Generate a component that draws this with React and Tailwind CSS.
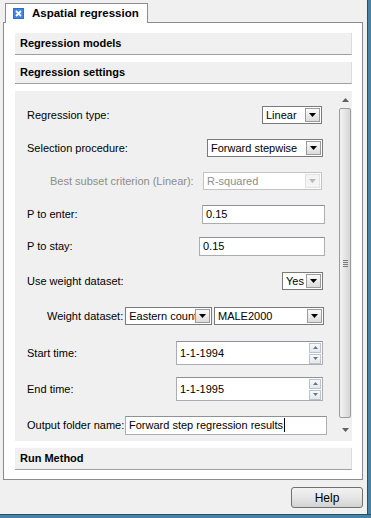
const font = { fontFamily: '"Liberation Sans", Arial, sans-serif' };

function Arrow({ disabled }) {
  return (
    <svg width="7" height="4" viewBox="0 0 7 4">
      <path d="M0 0h7L3.5 4z" fill={disabled ? "#b8b8b8" : "#000"} />
    </svg>
  );
}

function Combo({ value, className, disabled }) {
  return (
    <div
      className={`flex h-[18px] shrink-0 items-center border bg-white pr-px ${
        disabled ? "border-[#c4c4c4] bg-[#f4f4f4] text-[#8d8d8d]" : "border-[#7a7a7a] text-black"
      } ${className}`}
    >
      <span className="flex-1 overflow-hidden whitespace-nowrap pl-[3px] leading-[16px]">{value}</span>
      <div
        className={`flex h-[14px] w-[15px] shrink-0 items-center justify-center border ${
          disabled ? "border-[#e2e2e2] bg-[#f4f4f4]" : "border-[#9b9b9b] bg-gradient-to-b from-[#fafafa] to-[#dcdcdc]"
        }`}
      >
        <Arrow disabled={disabled} />
      </div>
    </div>
  );
}

function TextBox({ value, className, caret }) {
  return (
    <div className={`flex h-[19px] shrink-0 items-center border border-[#abadb3] border-t-[#8e9196] bg-white pl-[3px] ${className}`}>
      <span className="whitespace-nowrap leading-[16px]">{value}</span>
      {caret && <span className="ml-px h-[14px] w-px bg-black" />}
    </div>
  );
}

function SpinArrow({ up }) {
  return (
    <div className="flex h-[10px] w-[12px] items-center justify-center border border-[#b9c3cf] bg-gradient-to-b from-[#f7f9fb] to-[#e3e8ee]">
      <svg width="5" height="3" viewBox="0 0 5 3">
        <path d={up ? "M0 3h5L2.5 0z" : "M0 0h5L2.5 3z"} fill="#6d7680" />
      </svg>
    </div>
  );
}

function Spin({ value }) {
  return (
    <div className="mr-[15px] ml-auto flex h-[24px] w-[147px] items-center border border-[#abadb3] border-t-[#8e9196] bg-white pr-px pl-[3px]">
      <span className="flex-1 leading-[16px]">{value}</span>
      <div className="flex flex-col gap-px">
        <SpinArrow up />
        <SpinArrow />
      </div>
    </div>
  );
}

function Header({ title }) {
  return (
    <div className="flex h-[22px] items-center border-r border-b border-r-[#dcdcdc] border-b-[#a0a0a0] bg-[#f0f0f0] pl-[5px] text-[11px] font-bold text-black">
      {title}
    </div>
  );
}

function Row({ className, children }) {
  return <div className={`flex h-[20px] items-center whitespace-nowrap ${className}`}>{children}</div>;
}

export default function App() {
  return (
    <div className="flex h-[518px] w-[371px] flex-col overflow-hidden bg-[#f0f0f0] text-[11px] text-black" style={font}>
      <div className="flex flex-1">
        <div className="flex w-[367px] flex-col">
          {/* tab strip */}
          <div className="ml-[3px] flex h-[23px] w-[360px] items-end">
            <div className="h-full w-[2px] border-b border-[#898c95]" />
            <div className="flex h-[20px] w-[143px] items-center gap-[8px] border border-b-0 border-[#898c95] bg-white pl-[7px]">
              <svg width="11" height="11" viewBox="0 0 11 11">
                <rect x="0" y="0" width="11" height="11" fill="#2f6fc8" />
                <rect x="1" y="1" width="9" height="9" fill="#3f86e0" />
                <path d="M3 3l5 5M8 3l-5 5" stroke="#fff" strokeWidth="1.8" />
              </svg>
              <span className="text-[11.5px] font-bold">Aspatial regression</span>
            </div>
            <div className="h-full flex-1 border-b border-[#898c95]" />
          </div>

          {/* tab panel */}
          <div className="ml-[3px] flex h-[457px] w-[360px] flex-col gap-[7px] border border-t-0 border-[#898c95] bg-white pt-[10px] pr-[10px] pl-[11px]">
            <Header title="Regression models" />
            <Header title="Regression settings" />

            <div className="flex h-[350px] bg-[#f0f0f0]">
              <div className="flex flex-1 flex-col pt-[14px]">
                <Row className="pl-[12px]">
                  <span>Regression type:</span>
                  <Combo value="Linear" className="mr-[16px] ml-auto w-[60px]" />
                </Row>
                <Row className="mt-[13px] pl-[12px]">
                  <span>Selection procedure:</span>
                  <Combo value="Forward stepwise" className="mr-[15px] ml-auto w-[116px]" />
                </Row>
                <Row className="mt-[13px] pl-[35px]">
                  <span className="text-[#8d8d8d]">Best subset criterion (Linear):</span>
                  <Combo value="R-squared" disabled className="mr-[16px] ml-auto w-[119px]" />
                </Row>
                <Row className="mt-[13px] pl-[12px]">
                  <span>P to enter:</span>
                  <TextBox value="0.15" className="mr-[13px] ml-auto w-[123px]" />
                </Row>
                <Row className="mt-[12px] pl-[12px]">
                  <span>P to stay:</span>
                  <TextBox value="0.15" className="mr-[13px] ml-auto w-[126px]" />
                </Row>
                <Row className="mt-[15px] pl-[12px]">
                  <span>Use weight dataset:</span>
                  <Combo value="Yes" className="mr-[15px] ml-auto w-[41px]" />
                </Row>
                <Row className="mt-[15px] pl-[32px]">
                  <span>Weight dataset:</span>
                  <Combo value="Eastern count" className="ml-[2px] w-[87px]" />
                  <Combo value="MALE2000" className="mr-[14px] ml-auto w-[110px]" />
                </Row>
                <div className="mt-[15px] flex h-[24px] items-center pl-[12px]">
                  <span>Start time:</span>
                  <Spin value="1-1-1994" />
                </div>
                <div className="mt-[12px] flex h-[24px] items-center pl-[12px]">
                  <span>End time:</span>
                  <Spin value="1-1-1995" />
                </div>
                <Row className="mt-[14px] pl-[12px]">
                  <span>Output folder name:</span>
                  <TextBox value="Forward step regression results" caret className="mr-[11px] ml-auto w-[202px]" />
                </Row>
              </div>

              {/* scrollbar */}
              <div className="flex w-[14px] flex-col items-center bg-[#f0f0f0]">
                <div className="flex h-[17px] items-center justify-center">
                  <svg width="7" height="4" viewBox="0 0 7 4">
                    <path d="M0 4h7L3.5 0z" fill="#606060" />
                  </svg>
                </div>
                <div className="flex h-[310px] w-[12px] items-center justify-center rounded-[2px] border border-[#9a9a9a] bg-gradient-to-r from-[#f4f4f4] to-[#d6d6d6]">
                  <div className="flex flex-col gap-px">
                    <div className="h-px w-[5px] bg-[#7a7a7a]" />
                    <div className="h-px w-[5px] bg-[#7a7a7a]" />
                    <div className="h-px w-[5px] bg-[#7a7a7a]" />
                    <div className="h-px w-[5px] bg-[#7a7a7a]" />
                  </div>
                </div>
                <div className="flex flex-1 items-center justify-center">
                  <svg width="7" height="4" viewBox="0 0 7 4">
                    <path d="M0 0h7L3.5 4z" fill="#606060" />
                  </svg>
                </div>
              </div>
            </div>

            <Header title="Run Method" />
          </div>

          {/* footer */}
          <div className="flex justify-end pt-[7px] pr-[4px]">
            <button className="h-[21px] w-[72px] rounded-[3px] border border-[#707070] bg-gradient-to-b from-[#f2f2f2] via-[#e6e6e6] to-[#d2d2d2] text-[12px] text-black">
              Help
            </button>
          </div>
        </div>
        <div className="w-[4px] border-l border-[#27506e] bg-[#4a82a6]" />
      </div>
      <div className="h-[4px] border-t border-[#27506e] bg-[#4a82a6]" />
    </div>
  );
}
